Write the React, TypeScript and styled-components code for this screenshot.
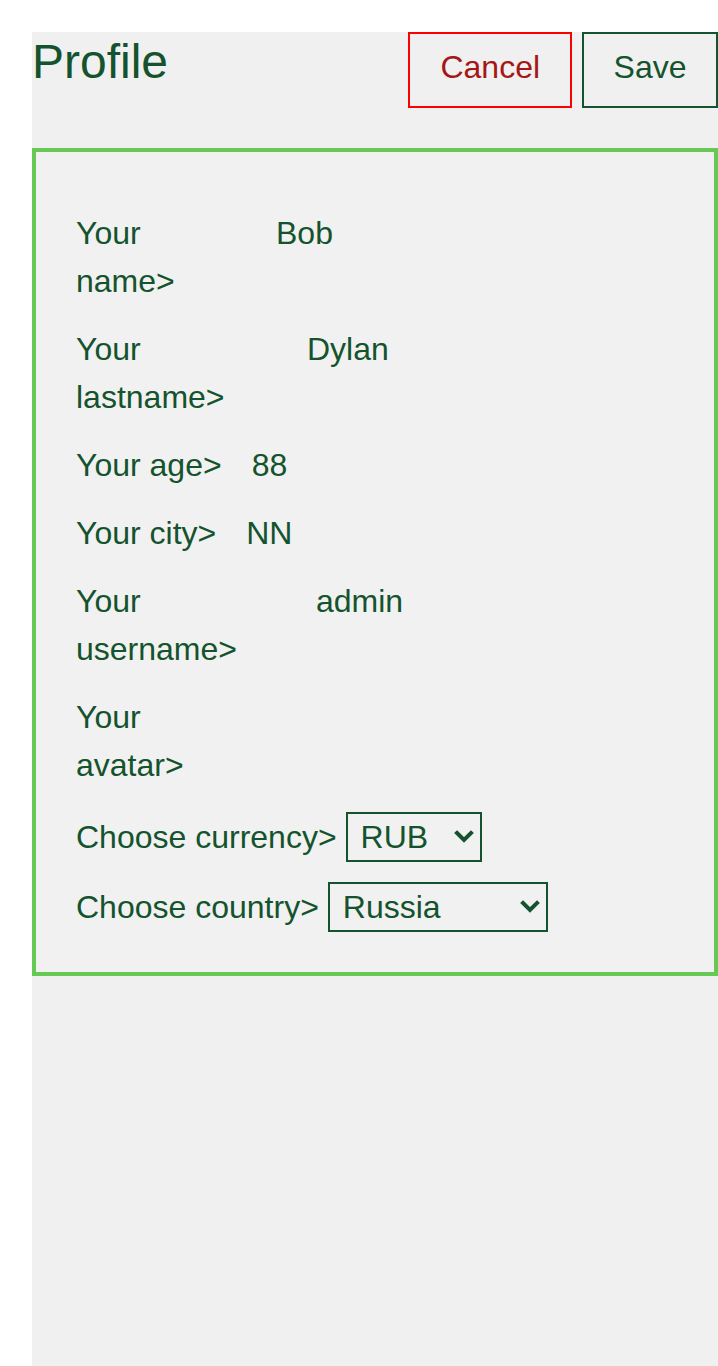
import React from "react";
import styled, { createGlobalStyle } from "styled-components";

const GREEN = "#14532d";

const Global = createGlobalStyle`
  html, body { margin: 0; padding: 0; background: #ffffff; }
  body {
    padding: 32px 0 0 32px;
    font-family: "Liberation Sans", Arial, sans-serif;
    color: ${GREEN};
  }
`;

const Page = styled.div`
  background: #f0f0f0;
  min-height: calc(100vh - 32px);
  box-sizing: border-box;
`;

const Header = styled.header`
  display: flex;
  align-items: baseline;
  justify-content: space-between;
`;

const Title = styled.h1`
  margin: 0;
  font-size: 48px;
  font-weight: 400;
  color: ${GREEN};
`;

const Actions = styled.div`
  display: flex;
  gap: 10px;
  align-items: baseline;
`;

const Button = styled.button<{ $variant: "cancel" | "save" }>`
  font-family: "Liberation Sans", Arial, sans-serif;
  font-size: 32px;
  line-height: 37px;
  padding: 15px ${(p) => (p.$variant === "cancel" ? 30 : 29.5)}px 20px;
  background: transparent;
  border: 2px solid ${(p) => (p.$variant === "cancel" ? "#ff0000" : GREEN)};
  color: ${(p) => (p.$variant === "cancel" ? "#a51616" : GREEN)};
  cursor: pointer;
`;

const Card = styled.section`
  margin-top: 40px;
  border: 4px solid #66c855;
  padding: 57px 40px 40px;
  background: #f1f1f1;
`;

const Form = styled.div`
  display: flex;
  flex-direction: column;
  gap: 20px;
`;

const Row = styled.div<{ $extra?: number }>`
  display: flex;
  align-items: flex-start;
  font-size: 32px;
  line-height: 48px;
  margin-bottom: ${(p) => p.$extra ?? 0}px;
`;

const Label = styled.span<{ $w?: number }>`
  flex: none;
  width: ${(p) => (p.$w ? `${p.$w}px` : "auto")};
`;

const LabelText = styled.span<{ $stack?: boolean }>`
  display: block;
  width: ${(p) => (p.$stack ? "min-content" : "auto")};
`;

const Value = styled.span`
  margin-left: 30px;
`;

const SelectRow = styled.div`
  display: flex;
  align-items: baseline;
  gap: 9px;
  font-size: 32px;
  line-height: 48px;
`;

const SelectWrap = styled.span`
  position: relative;
  display: inline-flex;
`;

const Select = styled.select<{ $w: number }>`
  appearance: none;
  -webkit-appearance: none;
  width: ${(p) => p.$w}px;
  height: 50px;
  font-family: "Liberation Sans", Arial, sans-serif;
  font-size: 32px;
  color: ${GREEN};
  background: transparent;
  border: 2px solid ${GREEN};
  border-radius: 0;
  padding: 0 30px 0 13px;
`;

const Chevron = styled.svg`
  position: absolute;
  right: 8px;
  top: 18px;
  width: 20px;
  height: 14px;
  pointer-events: none;
`;

const fields: { label: string; value: string; w?: number; extra?: number }[] = [
  { label: "Your name>", value: "Bob", w: 170 },
  { label: "Your lastname>", value: "Dylan", w: 201 },
  { label: "Your age>", value: "88" },
  { label: "Your city>", value: "NN" },
  { label: "Your username>", value: "admin", w: 210 },
  { label: "Your avatar>", value: "", w: 177, extra: 3 },
];

function Dropdown({ width, value, options }: { width: number; value: string; options: string[] }) {
  return (
    <SelectWrap>
      <Select $w={width} defaultValue={value}>
        {options.map((o) => (
          <option key={o}>{o}</option>
        ))}
      </Select>
      <Chevron viewBox="0 0 20 14" aria-hidden="true">
        <polyline
          points="3,3 10,10 17,3"
          fill="none"
          stroke={GREEN}
          strokeWidth="4"
          strokeLinecap="square"
          strokeLinejoin="miter"
        />
      </Chevron>
    </SelectWrap>
  );
}

export default function App() {
  return (
    <>
      <Global />
      <Page>
        <Header>
          <Title>Profile</Title>
          <Actions>
            <Button $variant="cancel">Cancel</Button>
            <Button $variant="save">Save</Button>
          </Actions>
        </Header>
        <Card>
          <Form>
            {fields.map((f) => (
              <Row key={f.label} $extra={f.extra}>
                <Label $w={f.w}>
                  <LabelText $stack={!!f.w}>{f.label}</LabelText>
                </Label>
                {f.value && <Value>{f.value}</Value>}
              </Row>
            ))}
            <SelectRow>
              <span>Choose currency&gt;</span>
              <Dropdown width={136} value="RUB" options={["RUB", "USD", "EUR"]} />
            </SelectRow>
            <SelectRow>
              <span>Choose country&gt;</span>
              <Dropdown width={220} value="Russia" options={["Russia", "USA", "Germany"]} />
            </SelectRow>
          </Form>
        </Card>
      </Page>
    </>
  );
}
